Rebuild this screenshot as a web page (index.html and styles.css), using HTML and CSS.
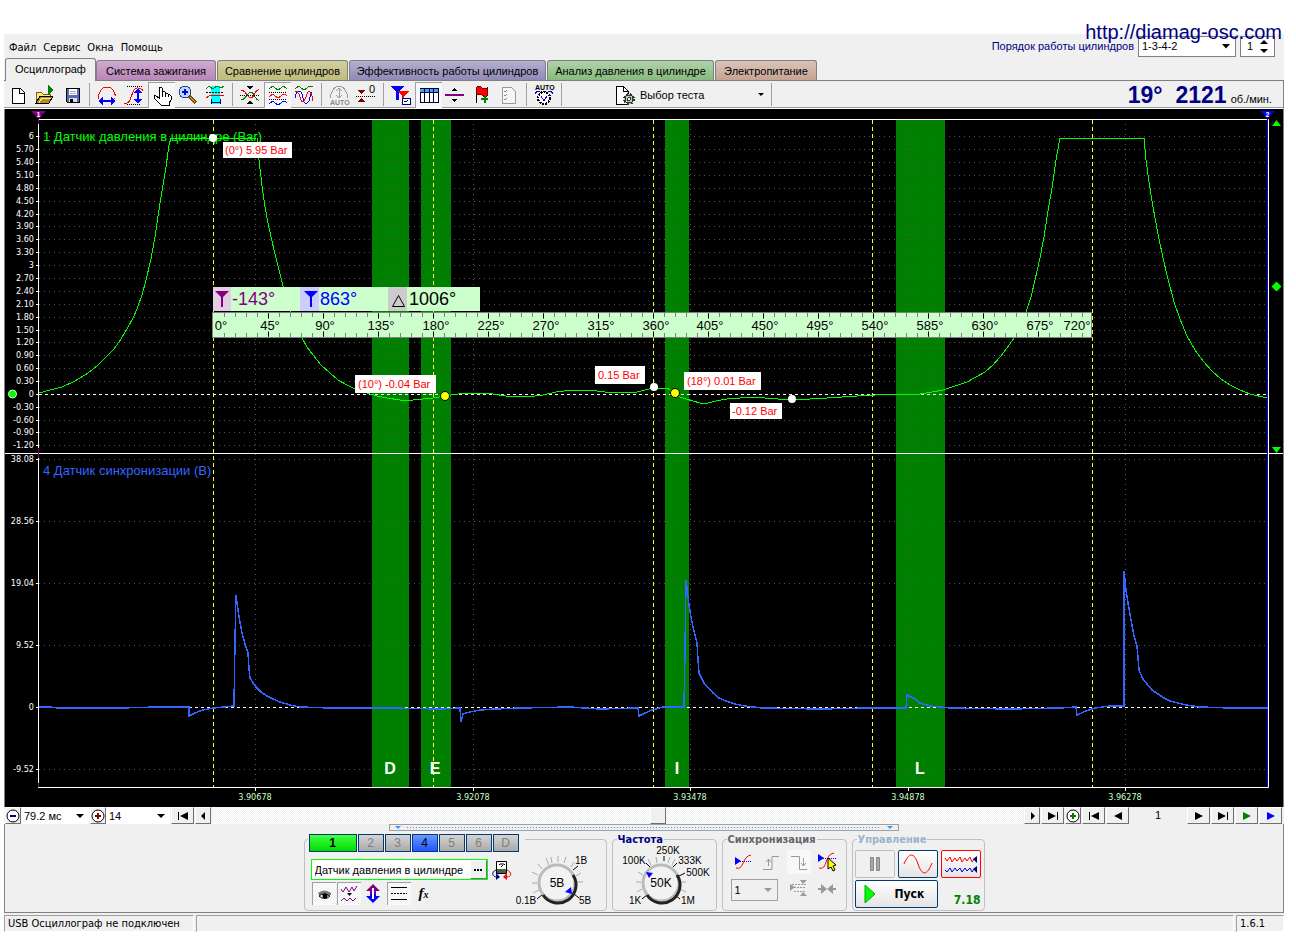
FILE: index.html
```html
<!DOCTYPE html>
<html lang="ru">
<head>
<meta charset="utf-8">
<title>Осциллограф</title>
<link rel="stylesheet" href="styles.css">
</head>
<body>
<a class="site-link" href="#">http://diamag-osc.com</a>
<main class="app">
  <header class="menubar">
    <nav class="menu">
      <a href="#">Файл</a><a href="#">Сервис</a><a href="#">Окна</a><a href="#">Помощь</a>
    </nav>
    <div class="order">
      <label for="order">Порядок работы цилиндров</label>
      <span class="combo combo-order"><select id="order"><option>1-3-4-2</option></select><svg class="caret" width="8" height="5"><path d="M0 0h8L4 4.500z"/></svg></span>
      <span class="spin"><input type="text" value="1" aria-label="Цилиндр"><svg width="8" height="13"><path d="M0 4h8L4 0zM0 9h8L4 13z"/></svg></span>
    </div>
  </header>

  <div class="tabs" role="tablist">
    <button class="tab tab-on" role="tab">Осциллограф</button>
    <button class="tab tab-ignition" role="tab">Система зажигания</button>
    <button class="tab tab-compare" role="tab">Сравнение цилиндров</button>
    <button class="tab tab-effect" role="tab">Эффективность работы цилиндров</button>
    <button class="tab tab-pressure" role="tab">Анализ давления в цилиндре</button>
    <button class="tab tab-power" role="tab">Электропитание</button>
  </div>

  <div class="toolbar">
    <button class="tool" aria-label="Новый"><svg class="ico" viewBox="0 0 22 22"><path d="M5 4h8l4 4v11H5z" fill="#fff" stroke="#000"/><path d="M12 4v5h5" fill="none" stroke="#000"/></svg></button>
    <button class="tool" aria-label="Открыть"><svg class="ico" viewBox="0 0 22 22"><path d="M2 19V8h5l2 2h7v4" fill="#ffe680" stroke="#806000"/><path d="M2 19l4-7h13l-4 7z" fill="#b89020" stroke="#000"/><path d="M5 19l3-5h9" fill="none" stroke="#fff0a0"/><path d="M14 1l5 5-5 5z" fill="#008000"/></svg></button>
    <button class="tool" aria-label="Сохранить"><svg class="ico" viewBox="0 0 22 22"><path d="M5 4h13v14H6l-1-1z" fill="#5868b8" stroke="#000"/><path d="M8 5h8v6H8z" fill="#fff"/><path d="M9 7h6M9 9h6" stroke="#aaa"/><path d="M8 14h8v4H8z" fill="#ddd"/><path d="M9 15h3v3H9z"/></svg></button>
    <i class="sep"></i>
    <button class="tool" aria-label="Растянуть по горизонтали"><svg class="ico" viewBox="0 0 22 22"><path d="M3 15C2 9 5 3 11 3s9 6 8 12" fill="none" stroke="red"/><path d="M6 17h10" stroke="#00f" stroke-width="2"/><path d="M2 17l5-4v8zM20 17l-5-4v8z" fill="#00f"/></svg></button>
    <button class="tool" aria-label="Растянуть по вертикали"><svg class="ico" viewBox="0 0 22 22"><path d="M1 19h3c5 0 4-16 11-15 3 0 4 1 5 3" fill="none" stroke="red"/><path d="M4 2.500h16M4 20.500h14" stroke="#000" stroke-dasharray="1 1"/><path d="M15 7v11" stroke="#00f" stroke-width="2"/><path d="M15 4l4 5h-8zM15 20l4-5h-8z" fill="#00f"/></svg></button>
    <button class="tool on" aria-label="Рука"><svg class="ico" viewBox="0 0 22 22"><path d="M8 14V4q1.500-2 3 0v6V8q1.500-1 3 0v2q1.500-1 3 0v1q1.500-1 3 1v4l-2 3v2H10L4 15q-2-4 1-3z" fill="#fff" stroke="#000"/><path d="M11 10v3M14 10v3M17 11v2" stroke="#000"/></svg></button>
    <button class="tool" aria-label="Лупа"><svg class="ico" viewBox="0 0 22 22"><path d="M12 12l7 7" stroke="#805000" stroke-width="4"/><path d="M12 12l6 6" stroke="#e0b050"/><circle cx="8" cy="8" r="6" fill="#bcd9f5" stroke="#26477f"/><path d="M5 8h6M8 5v6" stroke="#00f" stroke-width="2"/></svg></button>
    <button class="tool" aria-label="Область"><svg class="ico" viewBox="0 0 22 22"><path d="M7 2h9v18H7z" fill="cyan"/><path d="M2 5l3-3 4 3 4-3 4 2 3-2" fill="none" stroke="green"/><path d="M2 8.500h18" stroke="#000" stroke-dasharray="2 1"/><path d="M2 14l3-2 5-1 4 1 6-1" fill="none" stroke="red"/><path d="M7 15v5M16 15v5M7 18h9" stroke="#008"/></svg></button>
    <i class="sep"></i>
    <button class="tool" aria-label="Свести"><svg class="ico" viewBox="0 0 22 22"><path d="M2 16q3 0 6-5 4-6 7 0t5 5" fill="none" stroke="green"/><path d="M2 6q3 0 6 5 4 6 7 0t5-5" fill="none" stroke="red"/><path d="M1 11.500h20" stroke="#000" stroke-dasharray="1 1"/><path d="M8 2h6l-3 4zM8 20h6l-3-4z"/></svg></button>
    <button class="tool on" aria-label="Раздельно"><svg class="ico" viewBox="0 0 22 22"><path d="M2 5q3-4 6-1t6 0 6 1" fill="none" stroke="green"/><path d="M2 13q3-4 6-1t6 0 6 0" fill="none" stroke="red"/><path d="M2 20q3-4 6-1t6 0 6 0" fill="none" stroke="#00f"/><path d="M2 8.500h18M2 15.500h18" stroke="#000" stroke-dasharray="1 1"/></svg></button>
    <button class="tool" aria-label="Наложить"><svg class="ico" viewBox="0 0 22 22"><path d="M2 5q3-4 6-1t6 0 6-1" fill="none" stroke="green"/><path d="M2 14q1-7 4-7t4 7 4 5 3-6 2-5" fill="none" stroke="#00f"/><path d="M2 8q3-2 5 5t4 4 3-7 3-2 3 9" fill="none" stroke="red"/></svg></button>
    <i class="sep"></i>
    <button class="tool" aria-label="Авто масштаб"><svg class="ico" viewBox="0 0 22 22"><path d="M2 14C3 7 7 2 11 2s8 5 9 12" fill="none" stroke="#999"/><path d="M11 5v8M8 7l3-3 3 3M8 11l3 3 3-3" fill="none" stroke="#999"/><text x="2" y="21" class="auto dim">AUTO</text></svg></button>
    <button class="tool" aria-label="Ноль"><svg class="ico" viewBox="0 0 22 22"><path d="M2 6h8l-4 4zM2 18h8l-4-4z" fill="maroon"/><path d="M1 12.500h20" stroke="#000" stroke-dasharray="1 1"/><text x="14" y="9" class="zero">0</text></svg></button>
    <i class="sep"></i>
    <button class="tool" aria-label="Маркеры"><svg class="ico" viewBox="0 0 22 22"><path d="M1 2h13L9 8v8H6V8z" fill="#00f"/><path d="M7 7h12l-5 5v6h-2v-6z" fill="red"/><path d="M12 14h8v6h-8z" fill="#fff" stroke="#008"/><path d="M14 17h1l1 1 2-2" fill="none" stroke="#000"/></svg></button>
    <button class="tool on" aria-label="Таблица"><svg class="ico" viewBox="0 0 22 22"><path d="M2 4h18v14H2z" fill="#fff" stroke="#003"/><path d="M2 4h18v4H2z" fill="#48a0f0"/><path d="M2 4h18M2 8h18M6.500 4v14M11 4v14M15.500 4v14" stroke="#003"/></svg></button>
    <button class="tool" aria-label="Линия"><svg class="ico" viewBox="0 0 22 22"><path d="M1 11h19" stroke="purple" stroke-width="2"/><path d="M8 7h5l-2.500-3zM8 15h5l-2.500 3z"/></svg></button>
    <button class="tool" aria-label="Метка"><svg class="ico" viewBox="0 0 22 22"><path d="M5 3v16" stroke="#000"/><path d="M5 4q3-3 6 0 3 1 5 0v8q-3 1-5-1-3-2-6 0z" fill="red" stroke="#700"/><path d="M14 12v7M10 15h7" stroke="green" stroke-width="2"/></svg></button>
    <button class="tool" aria-label="Список"><svg class="ico" viewBox="0 0 22 22"><path d="M4 3h9l4 4v12H4z" fill="#f6f6f6" stroke="#999"/><path d="M6 7l1 1 2-2M6 11l1 1 2-2M6 15l1 1 2-2" fill="none" stroke="#888"/></svg></button>
    <i class="sep"></i>
    <button class="tool" aria-label="Авто запуск"><svg class="ico" viewBox="0 0 22 22"><text x="2" y="6" class="auto">AUTO</text><path d="M3 10q-1-3 4-3M19 10q1-3-4-3" fill="none" stroke="#00f"/><circle cx="11" cy="14" r="6" fill="#fff" stroke="#000" stroke-dasharray="2 1" stroke-width="2"/><path d="M8 12l3 5 3-5" fill="none" stroke="#00f"/></svg></button>
    <i class="sep"></i>
    <button class="tests"><svg class="ico" viewBox="0 0 22 22"><path d="M2 2h7l5 5v13H2z" fill="#fff" stroke="#000"/><path d="M9 2v5h5" fill="none" stroke="#000"/><circle cx="15" cy="15" r="5" fill="#a8c8a8" stroke="#333" stroke-width="2" stroke-dasharray="2 2"/><circle cx="15" cy="15" r="4" fill="#b8d0b8" stroke="#333"/><circle cx="15" cy="15" r="1.500" fill="#fff" stroke="#333"/></svg><span>Выбор теста</span><svg class="caret" width="6" height="4"><path d="M0 0h6L3 3z"/></svg></button>
    <i class="sep"></i>
    <output class="rpm"><b>19°</b><b>2121</b><span>об./мин.</span></output>
  </div>

  <svg class="scope" viewBox="5 109 1278 698" role="img" aria-label="Осциллограмма">
    <g class="bands">
      <path d="M372 120h37v667h-37zM421 120h30v667h-30zM665 120h24v667h-24zM896 120h49v667h-49z"/>
    </g>
    <path class="dots" d="M39 136.500H1267M39 149.500H1267M39 162.500H1267M39 175.500H1267M39 188.500H1267M39 201.500H1267M39 214.500H1267M39 226.500H1267M39 239.500H1267M39 252.500H1267M39 265.500H1267M39 278.500H1267M39 291.500H1267M39 304.500H1267M39 317.500H1267M39 330.500H1267M39 342.500H1267M39 355.500H1267M39 368.500H1267M39 381.500H1267M39 407.500H1267M39 420.500H1267M39 432.500H1267M39 445.500H1267M39 459.500H1267M39 521.500H1267M39 583.500H1267M39 645.500H1267M39 769.500H1267"/>
    <path class="dots" d="M255.500 124V786M473.500 124V786M690.500 124V786M908.500 124V786M1125.500 124V786"/>
    <path class="ticks" d="M36 136.500h3M36 149.500h3M36 162.500h3M36 175.500h3M36 188.500h3M36 201.500h3M36 214.500h3M36 226.500h3M36 239.500h3M36 252.500h3M36 265.500h3M36 278.500h3M36 291.500h3M36 304.500h3M36 317.500h3M36 330.500h3M36 342.500h3M36 355.500h3M36 368.500h3M36 381.500h3M36 394.500h3M36 407.500h3M36 420.500h3M36 432.500h3M36 445.500h3M36 459.500h3M36 521.500h3M36 583.500h3M36 645.500h3M36 707.500h3M36 769.500h3M255.500 788v3M473.500 788v3M690.500 788v3M908.500 788v3M1125.500 788v3"/>
    <path class="zero-line" d="M39 394.500H1268M39 707.500H1268"/>
    <path class="marks" d="M213.500 120V787M433.500 120V787M653.500 120V787M872.500 120V787M1092.500 120V787"/>
    <path class="frame" d="M38.500 787V119.500H1268.500V787.500H38M5 453.500H1283"/>
    <path d="M38.500 118v6M38.500 448v10M38.500 783v4" stroke="purple"/>
    <path d="M1267.500 118V787" stroke="#00f"/>
    <path d="M31 111h15l-7.500 8z" fill="purple"/><text class="flag" x="38.500" y="117">1</text>
    <path d="M1260 111h15l-7.500 7z" fill="#00f"/><text class="flag" x="1267.500" y="117">2</text>
    <path d="M1272 126h9l-4.500-6zM1272 447h9l-4.500 6zM1271.500 286.500l5-5 5 5-5 5z" fill="lime"/>
    <circle cx="12.500" cy="394" r="4" fill="lime" stroke="#cfc"/>

    <g class="axis">
      <text x="34" y="139">6</text><text x="34" y="152">5.70</text><text x="34" y="165">5.40</text><text x="34" y="178">5.10</text><text x="34" y="191">4.80</text><text x="34" y="204">4.50</text><text x="34" y="217">4.20</text><text x="34" y="229">3.90</text><text x="34" y="242">3.60</text><text x="34" y="255">3.30</text><text x="34" y="268">3</text><text x="34" y="281">2.70</text><text x="34" y="294">2.40</text><text x="34" y="307">2.10</text><text x="34" y="320">1.80</text><text x="34" y="333">1.50</text><text x="34" y="345">1.20</text><text x="34" y="358">0.90</text><text x="34" y="371">0.60</text><text x="34" y="384">0.30</text><text x="34" y="397">0</text><text x="34" y="410">-0.30</text><text x="34" y="423">-0.60</text><text x="34" y="435">-0.90</text><text x="34" y="448">-1.20</text>
      <text x="34" y="462">38.08</text><text x="34" y="524">28.56</text><text x="34" y="586">19.04</text><text x="34" y="648">9.52</text><text x="34" y="710">0</text><text x="34" y="772">-9.52</text>
    </g>
    <g class="time"><text x="255" y="800">3.90678</text><text x="473" y="800">3.92078</text><text x="690" y="800">3.93478</text><text x="908" y="800">3.94878</text><text x="1125" y="800">3.96278</text></g>
    <text class="title" x="43" y="141" fill="lime">1 Датчик давления в цилиндре (Bar)</text>
    <text class="title" x="43" y="475" fill="#36f">4 Датчик синхронизации (В)</text>
    <g class="stroke-name"><text x="390" y="774">D</text><text x="435" y="774">E</text><text x="677" y="774">I</text><text x="920" y="774">L</text></g>

    <polyline class="wave" stroke="lime" points="39,393 50,390 62,387 75,381 88,373 98,365 106,357 114,349 121,339 128,327 133,318 137,309 142,295 146,280 151,259 155,237 160,203 163,185 166,167 169,145 171,138 190,138 213,139 257,138 258,148 259,160 262,186 265,207 268,223 271,237 277,262 283,286 289,307 295,325 302,338 307,347 313,355 321,365 330,373 338,380 347,385 357,390 367,393 377,396 387,398 400,400 413,400 423,399 433,398 445,396 458,394 473,393 493,394 506,396 520,396 535,396 543,395 556,392 573,390 585,390 597,391 613,393 637,392 645,390 653,388 667,388 675,393 680,397 686,399 693,401 700,403 708,403 716,401 727,399 740,398 753,397 765,398 778,399 792,399 810,399 827,398 842,397 857,396 875,395 893,394 920,394 932,392 943,390 955,386 967,382 976,377 985,372 993,365 1000,357 1007,348 1014,338 1020,326 1026,312 1031,297 1035,280 1040,258 1044,237 1048,211 1052,188 1056,160 1060,138 1144,138 1146,160 1149,182 1153,207 1158,234 1163,258 1168,279 1174,302 1180,319 1187,336 1195,350 1203,361 1212,371 1221,379 1230,385 1240,390 1250,394 1267,398"/>
    <polyline class="wave sync" points="39,707 50,707 58,708 120,708 158,707 189,707 189,716 195,713 203,710 213,708 234,706 235,640 236,595 237,603 239,617 242,633 245,644 248,653 249,669 250,678 253,683 256,687 261,692 267,696 273,699 280,702 290,705 300,707 330,708 390,708 440,709 460,708 461,722 463,714 470,712 480,710 495,709 520,708 570,707 600,709 638,708 639,716 645,713 652,710 663,707 684,707 685,650 686,580 688,597 690,612 693,627 697,643 698,660 699,673 704,683 713,693 719,698 726,701 735,704 745,706 762,708 820,709 870,708 906,708 907,695 911,697 915,699 920,703 930,706 950,708 1010,709 1060,708 1076,707 1077,715 1086,711 1095,708 1110,706 1124,706 1124,571 1126,590 1128,603 1131,620 1134,636 1137,646 1139,670 1143,679 1147,684 1152,690 1158,694 1164,698 1170,701 1178,703 1186,705 1200,707 1230,708 1268,708"/>

    <g class="note"><path d="M223 142h69v16h-69zM355 375h81v18h-81zM595 366h50v18h-50zM684 372h77v18h-77zM730 403h52v16h-52z"/>
      <text x="225" y="154">(0°) 5.95 Bar</text><text x="358" y="388">(10°) -0.04 Bar</text><text x="598" y="379">0.15 Bar</text><text x="687" y="385">(18°) 0.01 Bar</text><text x="732" y="415">-0.12 Bar</text></g>
    <g fill="#fff"><circle cx="213" cy="138" r="4"/><circle cx="654" cy="387" r="4"/><circle cx="792" cy="399" r="4"/></g>
    <g fill="yellow" stroke="#000"><circle cx="445" cy="396" r="4.500"/><circle cx="675" cy="393" r="4.500"/></g>

    <path d="M213 287h267v24H213z" fill="#cfc"/>
    <path d="M213 287h18v24h-18z" fill="#e5cce5"/><path d="M300 287h19v24h-19z" fill="#ccf"/><path d="M388 287h19v24h-19z" fill="#ccc"/>
    <path d="M215 291h14l-6 6v10h-2v-10z" fill="purple"/><path d="M304 291h14l-6 6v10h-2v-10z" fill="#00f"/><path d="M398.500 295.500l6 11h-12z" fill="none" stroke="#000"/>
    <g class="angle"><text x="232" y="305" fill="purple">-143°</text><text x="320" y="305" fill="#00f">863°</text><text x="409" y="305">1006°</text></g>

    <path d="M212.500 312.500h879v25h-879z" fill="#cfc" stroke="#808080"/>
    <path d="M224 315h864M224 335h864" stroke="#808080" stroke-width="4" stroke-dasharray="1 10"/>
    <path d="M268 316h770M268 334h780" stroke="#000" stroke-width="5" stroke-dasharray="1 54"/>
    <g class="degree"><text x="221" y="330">0°</text><text x="270" y="330">45°</text><text x="325" y="330">90°</text><text x="381" y="330">135°</text><text x="436" y="330">180°</text><text x="491" y="330">225°</text><text x="546" y="330">270°</text><text x="601" y="330">315°</text><text x="656" y="330">360°</text><text x="710" y="330">405°</text><text x="765" y="330">450°</text><text x="820" y="330">495°</text><text x="875" y="330">540°</text><text x="930" y="330">585°</text><text x="985" y="330">630°</text><text x="1040" y="330">675°</text><text x="1077" y="330">720°</text></g>
  </svg>

  <div class="timebar">
    <button class="nav small" aria-label="Уменьшить"><svg width="14" height="14"><circle cx="7" cy="7" r="6" fill="#fff" stroke="#000"/><path d="M4 7h6" stroke="navy" stroke-width="2"/></svg></button>
    <span class="combo combo-time"><select aria-label="Развёртка"><option>79.2 мс</option></select><svg class="caret" width="8" height="4"><path d="M0 0h8L4 4z"/></svg></span>
    <button class="nav small" aria-label="Увеличить"><svg width="14" height="14"><circle cx="7" cy="7" r="6" fill="#fff" stroke="#000"/><path d="M4 7h6M7 4v6" stroke="maroon" stroke-width="2"/></svg></button>
    <span class="combo combo-count"><select aria-label="Количество"><option>14</option></select><svg class="caret" width="8" height="4"><path d="M0 0h8L4 4z"/></svg></span>
    <button class="nav" aria-label="В начало"><svg width="12" height="8"><path d="M1 0h1v8H1zM11 0v8L3 4z"/></svg></button>
    <button class="nav small" aria-label="Назад"><svg width="5" height="8"><path d="M4 0v8L0 4z"/></svg></button>
    <div class="track"><button class="thumb" aria-label="Позиция"></button></div>
    <button class="nav small" aria-label="Вперёд"><svg width="5" height="8"><path d="M1 0v8l4-4z"/></svg></button>
    <button class="nav" aria-label="В конец"><svg width="12" height="8"><path d="M10 0h1v8h-1zM1 0v8l8-4z"/></svg></button>
    <button class="nav small" aria-label="Добавить"><svg width="14" height="14"><circle cx="7" cy="7" r="6" fill="#fff" stroke="#000"/><path d="M4 7h6M7 4v6" stroke="green" stroke-width="2"/></svg></button>
    <button class="nav" aria-label="Первый кадр"><svg width="12" height="8"><path d="M1 0h1v8H1zM11 0v8L3 4z"/></svg></button>
    <button class="nav" aria-label="Предыдущий кадр"><svg width="8" height="8"><path d="M8 0v8L0 4z"/></svg></button>
    <span class="frame-no">1</span>
    <button class="nav" aria-label="Следующий кадр"><svg width="8" height="8"><path d="M0 0v8l8-4z"/></svg></button>
    <button class="nav" aria-label="Последний кадр"><svg width="12" height="8"><path d="M10 0h1v8h-1zM1 0v8l8-4z"/></svg></button>
    <button class="nav" aria-label="Воспроизвести"><svg width="8" height="8"><path d="M0 0v8l8-4z" fill="green"/></svg></button>
    <button class="nav" aria-label="Воспроизвести всё"><svg width="8" height="8"><path d="M0 0v8l8-4z" fill="#00f"/></svg></button>
  </div>

  <section class="panel">
    <div class="grip"><svg width="6" height="4"><path d="M0 0h6L3 3z"/></svg><i></i><svg width="6" height="4"><path d="M0 0h6L3 3z"/></svg></div>
    <div class="groups">
      <fieldset class="group group-channel">
        <legend class="channels"><button class="ch ch-one">1</button><button class="ch">2</button><button class="ch">3</button><button class="ch ch-four">4</button><button class="ch">5</button><button class="ch">6</button><button class="ch">D</button></legend>
        <div class="channel-body">
          <div class="channel-left">
            <div class="sensor-row">
              <div class="sensor"><input type="text" value="Датчик давления в цилиндре" aria-label="Датчик"><button aria-label="Выбрать датчик"><svg width="9" height="2"><path d="M0 0h2v2H0zM3 0h2v2H3zM6 0h2v2H6z"/></svg></button></div>
              <svg width="20" height="20"><path d="M4.500 1.500h10v12h-10z" fill="#fff" stroke="#000"/><path d="M7 5l1-1h4l1 1M9 7l2-2" stroke="#000" fill="none"/><path d="M5 9h9v4H5z" fill="#555"/><path d="M5 9.500h9" stroke="#0a0" stroke-dasharray="1 1"/><path d="M4 10c-5 2-4 7 1 7" fill="none" stroke="navy"/><path d="M4 13l4 4-4 3z" fill="navy"/><path d="M15 10c5 2 5 7 0 7" fill="none" stroke="red"/><path d="M15 13l-4 4 4 3z" fill="red"/></svg>
            </div>
            <div class="modes">
              <button class="mode on" aria-label="Видимость"><svg width="22" height="22"><path d="M5 10q6-5 13 0v2H6z" fill="#777"/><path d="M6 13q5-4 11 0-5 5-11 0z" fill="#fff" stroke="#000"/><circle cx="12" cy="13" r="2.500"/></svg></button>
              <button class="mode on" aria-label="Фильтр"><svg width="22" height="22"><path d="M3 6l2 3 3-5 3 5 3-5 2 4 3-5" fill="none" stroke="purple"/><path d="M9 10h5l-2.500 3z"/><path d="M3 18l3-3 3 3 3-3 3 3 3-3" fill="none" stroke="purple"/></svg></button>
              <button class="mode" aria-label="Инверсия"><svg width="22" height="22"><path d="M11 1l7 7h-4v3H8V8H4z" fill="purple"/><path d="M11 20l7-7h-4v-2H8v2H4z" fill="#00f"/><path d="M11 5v11" stroke="#fff" stroke-width="2"/></svg></button>
              <button class="mode on" aria-label="Линии"><svg width="22" height="22"><path d="M3 4.500h16M3 16.500h16" stroke="#000"/><path d="M3 10.500h16" stroke="#000" stroke-dasharray="2 1"/></svg></button>
              <button class="mode fx">f<small>x</small></button>
            </div>
          </div>
          <svg class="knob" width="84" height="62" viewBox="514 847 84 62"><path class="marksmall" d="M549 867l-3-7M542 871l-4-5M538 877l-6-3M537 885h-5M539 892l-6 3M552 865l-1-6M558 864v-6M564 865l2-6M571 869l3-5M577 884h6M576 878l5-3"/><path d="M573 872l5-4M574 896l5 4M543 896l-6 5" stroke="#000"/><circle cx="557" cy="885" r="18" class="dial"/><path d="M543 897a18 18 0 0 0 30-20" class="shade"/><text x="557" y="889" class="value">5В</text><path d="M571 889l1 7-7-2z" fill="#00f"/><text x="581" y="866">1В</text><text x="585" y="906">5В</text><text x="526" y="906">0.1В</text></svg>
        </div>
      </fieldset>
      <fieldset class="group group-rate">
        <legend>Частота</legend>
        <svg class="knob" width="100" height="62" viewBox="613 847 100 62"><path class="marksmall" d="M651 867l-3-6M643 877l-5-3M641 884h-5M642 891l-5 3M657 865l-1-6M668 865l2-6M681 884h5M680 891l6 3M672 867l3-6"/><path d="M664 863v-5M650 869l-4-4M673 869l4-4M679 878l6-3M647 897l-5 4M675 897l5 4" stroke="#000"/><circle cx="661" cy="885" r="18" class="dial"/><path d="M647 897a18 18 0 0 0 30-20" class="shade"/><text x="661" y="889" class="value">50K</text><path d="M646 874l7 1-4 5z" fill="#00f"/><text x="668" y="856">250K</text><text x="634" y="866">100K</text><text x="690" y="866">333K</text><text x="698" y="878">500K</text><text x="635" y="906">1K</text><text x="688" y="906">1M</text></svg>
      </fieldset>
      <fieldset class="group group-sync">
        <legend>Синхронизация</legend>
        <div class="sync-grid">
          <svg width="24" height="24"><path d="M4 7v8l6-4z" fill="#00f"/><path d="M9 11.500h12" stroke="#00f" stroke-dasharray="1 1"/><path d="M5 18c8 3 6-12 15-13" fill="none" stroke="red"/></svg>
          <svg width="24" height="24"><path d="M4 19.500h9V6.500h7M9.500 16V9M7 12l2.500-3 2.500 3" fill="none" stroke="#999"/></svg>
          <svg class="dim-on" width="24" height="24"><path d="M4 6.500h8.500v13H20M16.500 8v8M14 13l2.500 3 2.500-3" fill="none" stroke="#999"/></svg>
          <svg width="24" height="24"><path d="M3 4v8l6-4z" fill="#00f"/><path d="M8 8.500h14" stroke="#00f" stroke-dasharray="1 1"/><path d="M4 18c9 3 5-14 15-15" fill="none" stroke="red"/><path d="M13 8v11l3-2 2 4 2-1-2-4 3-1z" fill="#ff0" stroke="#000"/></svg>
          <span class="combo combo-sync"><select disabled aria-label="Канал синхронизации"><option>1</option></select><svg class="caret" width="8" height="4"><path d="M0 0h8L4 4z"/></svg></span>
          <svg width="24" height="24"><path d="M3 6v7l5-4zM13 2h7l-4 4zM13 18h7l-4-4z" fill="#999"/><path d="M7 9.500h12M5 6.500h14M7 13.500h12" stroke="#999" stroke-dasharray="2 1"/></svg>
          <svg width="24" height="24"><path d="M3 11h6M15 11h6" stroke="#999" stroke-width="2"/><path d="M6 6l6 5-6 5zM18 6l-6 5 6 5z" fill="#999"/></svg>
        </div>
      </fieldset>
      <fieldset class="group group-run">
        <legend>Управление</legend>
        <div class="run-grid">
          <button class="run" disabled aria-label="Пауза"><svg width="14" height="16"><path d="M2.500 1.500h3v13h-3zM8.500 1.500h3v13h-3z" fill="#aaa" stroke="#888"/></svg></button>
          <button class="run run-wave" aria-label="Одиночный"><svg width="32" height="24"><path d="M2 12C7 0 12 0 16 12s9 12 14-1" fill="none" stroke="red"/></svg></button>
          <button class="run run-multi" aria-label="Непрерывный"><svg width="34" height="24"><path d="M1 6l2 3 3-4 2 5 3-4 2 3 3-4 2 5 3-4 2 3 3-4 2 5 3-4" fill="none" stroke="red"/><path d="M1 18l2 2 3-4 2 4 3-4 2 3 3-3 2 4 3-4 2 3 3-3 2 4 3-4" fill="none" stroke="#00c"/><path d="M33 4v7l-4-4zM33 14v7l-4-4z" fill="navy"/></svg></button>
          <button class="run run-start"><svg width="12" height="20"><path d="M1 1v18l10-9z" fill="lime" stroke="#0a0"/></svg><span>Пуск</span></button>
          <b class="version">7.18</b>
        </div>
      </fieldset>
    </div>
  </section>

  <footer class="status"><span class="st-usb">USB Осциллограф не подключен</span><span class="st-mid"></span><span class="st-ver">1.6.1</span></footer>
</main>
</body>
</html>
```
FILE: styles.css
```css
* { box-sizing: border-box; }
body { margin: 0; background: #fff; color: #000; font: 11px/14px "Liberation Sans", Arial, sans-serif; }
button, input, select { font: inherit; color: inherit; margin: 0; padding: 0; border: 0; border-radius: 0; background: none; appearance: none; }
a { color: inherit; text-decoration: none; }
svg { display: block; flex: none; }

.site-link { position: absolute; top: 20px; right: 14px; z-index: 2; color: navy; font-size: 20px; line-height: 24px; }
.app { margin: 34px 12px 0 4px; background: #f0f0f0; }

.menubar { display: flex; justify-content: space-between; height: 24px; padding: 0 9px 0 5px; }
.menu { display: flex; align-items: flex-end; gap: 7px; padding-bottom: 3px; font: 11px/14px "DejaVu Sans Condensed", "DejaVu Sans", sans-serif; }
.order { display: flex; align-items: center; gap: 4px; color: navy; }
.combo { position: relative; display: block; background: #fff; color: #000; }
.combo select { display: block; width: 100%; height: 100%; padding: 0 3px; opacity: 1; }
.combo .caret { position: absolute; right: 5px; top: 50%; margin-top: -2px; pointer-events: none; }
.combo-order { width: 98px; height: 21px; border: 1px solid #808080; }
.spin { display: flex; align-items: center; width: 35px; height: 21px; padding: 0 6px; border: 1px solid #808080; background: #fff; color: #000; }
.spin input { flex: 1; width: 0; }

.tabs { display: flex; align-items: flex-end; gap: 1px; height: 23px; padding-left: 1px; border-bottom: 1px solid #808080; }
.tab { height: 20px; border: 1px solid #808080; border-bottom: 0; border-radius: 3px 3px 0 0; white-space: nowrap; }
.tab-on { width: 91px; height: 23px; margin: 0 -1px -1px 0; padding-bottom: 2px; background: #f0f0f0; }
.tab-ignition { width: 120px; background: linear-gradient(#cfa9cf, #b887b8); }
.tab-compare { width: 131px; background: linear-gradient(#d2cf9f, #bfbc7b); }
.tab-effect { width: 197px; background: linear-gradient(#b5afd0, #9089b5); }
.tab-pressure { width: 167px; background: linear-gradient(#b0d3a9, #87b97d); }
.tab-power { width: 102px; background: linear-gradient(#dac4b7, #c4a392); }

.toolbar { display: flex; align-items: center; height: 28px; padding-left: 1px; border-right: 1px solid #808080; border-bottom: 1px solid #fff; box-shadow: inset 0 -1px #999; }
.tool { display: flex; align-items: center; justify-content: center; width: 27px; height: 26px; padding-right: 1px; }
.ico { width: 22px; height: 22px; shape-rendering: crispEdges; }
.on { background: repeating-conic-gradient(#fff 0 25%, #f0f0f0 0 50%) 0 0 / 2px 2px; border-left: 1px solid #a0a0a0; border-top: 1px solid #a0a0a0; }
.sep { width: 8px; height: 23px; border-left: 3px solid transparent; border-right: 4px solid transparent; background: #a0a0a0; background-clip: padding-box; }
.auto { font: bold 7px "Liberation Sans", sans-serif; }
.dim { fill: #888; }
.zero { font: 11px "Liberation Sans", sans-serif; }
.tests { display: flex; align-items: center; gap: 4px; width: 154px; margin-left: 48px; }
.tests .caret { margin-left: auto; margin-right: 4px; }
.rpm { display: flex; align-items: baseline; margin-left: auto; padding-right: 11px; color: navy; }
.rpm b { margin-right: 13px; font-size: 23px; line-height: 26px; }
.rpm b + b { margin-right: 4px; }
.rpm span { color: #000; }

.scope { width: 100%; height: auto; background: #000; font-family: "Liberation Sans", Arial, sans-serif; border: solid #808080; border-width: 0 1px; }
.bands { fill: green; }
.dots { stroke: #555; stroke-dasharray: 1 4; fill: none; }
.ticks { stroke: #fff; }
.zero-line { stroke: #fff; stroke-dasharray: 3 3; }
.marks { stroke: #ff3; stroke-dasharray: 4 3; }
.frame { stroke: #fff; fill: none; }
.flag { fill: #fff; font-size: 7px; font-weight: bold; text-anchor: middle; }
.axis, .time { fill: #fff; font: 9px "DejaVu Sans Condensed", "DejaVu Sans", sans-serif; text-anchor: end; }
.time { fill: #cfc; text-anchor: middle; }
.title { font-size: 13px; }
.stroke-name { fill: #fff; font-size: 16px; font-weight: bold; text-anchor: middle; }
.wave { fill: none; shape-rendering: crispEdges; }
.sync { stroke: #36f; stroke-width: 1.5px; }
.note path { fill: #fff; }
.note text { fill: red; font-size: 11px; }
.angle { font-size: 18px; }
.degree { font-size: 13px; text-anchor: middle; }

.timebar { display: flex; gap: 1px; height: 17px; padding: 0 2px 0 1px; }
.nav { display: flex; align-items: center; justify-content: center; flex: none; width: 23px; height: 17px; background: #f0f0f0; border: 1px solid; border-color: #fff #707070 #707070 #fff; }
.small { width: 16px; }
.combo-time { width: 68px; margin-left: -1px; }
.combo-count { width: 64px; margin-left: -1px; }
.track { flex: 1; background: repeating-conic-gradient(#fff 0 25%, #f0f0f0 0 50%) 0 0 / 2px 2px; }
.thumb { display: block; width: 16px; height: 17px; margin-left: 54%; background: #f0f0f0; border: 1px solid; border-color: #fff #707070 #707070 #fff; }
.frame-no { width: 56px; text-align: center; line-height: 17px; }

.panel { display: flex; flex-direction: column; align-items: center; padding-bottom: 1px; border: solid #808080; border-width: 0 1px 1px; }
.grip { display: flex; align-items: center; gap: 6px; width: 510px; height: 7px; padding: 0 5px; border: 1px solid #a0a0a0; fill: #39f; }
.grip i { flex: 1; height: 1px; background: repeating-linear-gradient(90deg, #39f 0 1px, transparent 1px 3px); }
.groups { display: flex; gap: 5px; padding-top: 3px; }
.group { height: 77px; margin: 0; padding: 0; border: 1px solid #c0c0c0; border-radius: 4px; min-width: 0; }
.group legend { height: 11px; margin-left: 4px; padding: 0 1px; font: bold 11px/12px "DejaVu Sans Condensed", "DejaVu Sans", sans-serif; }
.group-channel { width: 303px; }
.group-rate { width: 105px; color: navy; }
.group-sync { width: 125px; color: #666; }
.group-run { width: 133px; color: #9ab3cf; }
.group .channels { display: flex; gap: 1px; margin-left: 3px; padding-right: 6px; }
.ch { width: 26px; height: 18px; border: 1px solid #003c74; background: linear-gradient(#d4d4d4, #aaa); color: #808080; font: 12px/14px "Liberation Sans", sans-serif; }
.ch-one { width: 48px; background: linear-gradient(#4f4, #0d0); color: #000; font-weight: bold; }
.ch-four { background: linear-gradient(#69f, #25f); color: #000; }
.channel-body { display: flex; justify-content: space-between; padding-right: 8px; }
.channel-left { padding: 14px 0 0 6px; }
.sensor-row { display: flex; align-items: center; gap: 4px; }
.sensor { display: flex; width: 177px; height: 21px; border: 1px solid lime; background: #fff; }
.sensor input { flex: 1; min-width: 0; padding-left: 3px; }
.sensor button { display: flex; align-items: center; justify-content: center; width: 17px; background: #f0f0f0; border: 1px solid; border-color: #fff #707070 #707070 #fff; }
.modes { display: flex; gap: 1px; padding: 2px 0 0 1px; }
.mode { width: 24px; height: 23px; }
.fx { font: italic bold 15px/20px "Liberation Serif", serif; }
.fx small { font-size: 10px; }
.knob { font: 10px "Liberation Sans", sans-serif; text-anchor: middle; }
.marksmall { stroke: #aaa; }
.dial { fill: #f2f2f2; stroke: #bbb; stroke-width: 3px; }
.shade { fill: none; stroke: #222; stroke-width: 3px; }
.value { font-size: 12px; }
.sync-grid { display: grid; grid-template-columns: 28px 28px 28px 24px; gap: 4px 0; padding: 5px 0 0 8px; align-items: center; }
.dim-on { background: #f8f8f8; }
.combo-sync { grid-column: span 2; width: 47px; height: 22px; border: 1px solid #a0a0a0; background: #f0f0f0; }
.combo-sync .caret { fill: #999; }
.run-grid { display: grid; grid-template-columns: 40px 40px 40px; gap: 2px 3px; padding: 5px 0 0 2px; }
.run { display: flex; align-items: center; justify-content: center; height: 28px; border: 1px solid #003c74; border-radius: 2px; background: linear-gradient(#fff, #e4e4e4); color: #000; }
.run:disabled { border-color: #c0c0c0; background: #f0f0f0; }
.run-multi { border-color: red; }
.run-start { grid-column: span 2; justify-content: flex-start; padding-left: 8px; gap: 19px; font: bold 12px/14px "DejaVu Sans Condensed", sans-serif; }
.version { align-self: end; justify-self: end; color: green; padding-bottom: 1px; font: bold 12px/14px "DejaVu Sans Condensed", sans-serif; }

.status { display: flex; gap: 2px; padding-top: 2px; font: 11px/15px "DejaVu Sans Condensed", "DejaVu Sans", sans-serif; }
.status span { height: 17px; padding-left: 3px; border: 1px solid; border-color: #a0a0a0 #fff #fff #a0a0a0; }
.st-usb { width: 190px; }
.st-mid { flex: 1; }
.st-ver { width: 48px; }
```
